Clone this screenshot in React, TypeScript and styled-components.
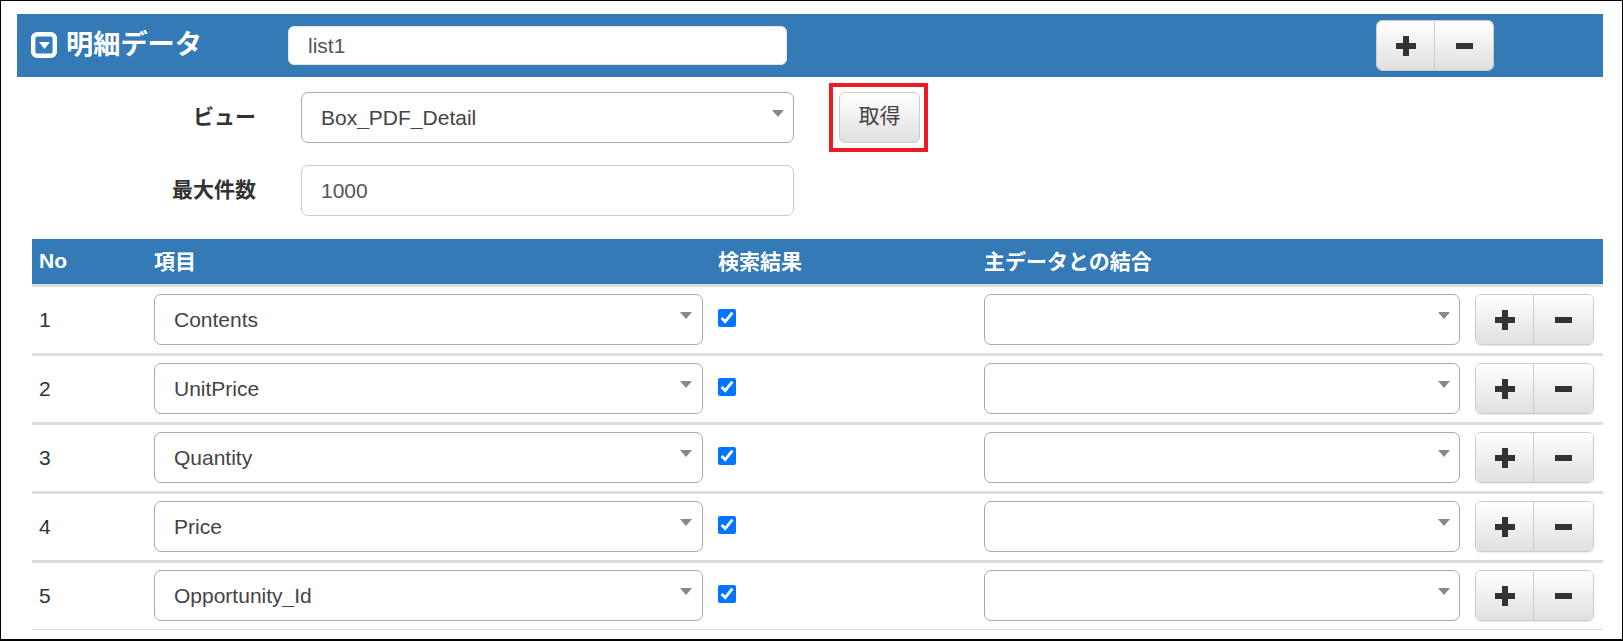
import React from "react";
import styled, { createGlobalStyle } from "styled-components";

const FONT = `"Liberation Sans", "Noto Sans CJK JP", sans-serif`;

const Global = createGlobalStyle`
  html, body { margin: 0; padding: 0; background: #fff; }
  * { box-sizing: border-box; }
`;

const Frame = styled.div`
  width: 1623px;
  height: 641px;
  border: 1px solid #000;
  border-bottom-width: 2px;
  padding: 13px 19px 0 16px;
  font-family: ${FONT};
  font-size: 21px;
  color: #333;
  overflow: hidden;
`;

const TitleBar = styled.div`
  height: 63px;
  background: #337ab7;
  display: flex;
  align-items: center;
  padding-left: 14px;
`;

const TitleGroup = styled.div`
  width: 257px;
  display: flex;
  align-items: center;
  gap: 9px;
`;

const IconBox = styled.span`
  display: flex;
  margin-bottom: 2px;
`;

const Title = styled.h2`
  margin: 0;
  padding-bottom: 2px;
  color: #fff;
  font-size: 27.2px;
  line-height: 32px;
  font-weight: 700;
  white-space: nowrap;
`;

const NameInput = styled.input`
  width: 499px;
  height: 39px;
  padding: 0 19px;
  border: 1px solid #e4e4e4;
  border-radius: 6px;
  background: #fff;
  color: #555;
  font: inherit;
`;

const BarActions = styled.div`
  margin-left: 589px;
  display: flex;
`;

const ButtonGroup = styled.div<{ $width: number }>`
  display: inline-flex;
  width: ${(p) => p.$width}px;
  height: 51px;
  border: 1px solid #ccc;
  border-radius: 6px;
  overflow: hidden;
  box-shadow: 0 1px 1px rgba(0, 0, 0, 0.08);
`;

const GroupButton = styled.button<{ $divided?: boolean }>`
  flex: ${(p) => (p.$divided ? "0 0 58px" : "1")};
  padding: 0;
  display: flex;
  align-items: center;
  justify-content: center;
  border: 0;
  border-right: ${(p) => (p.$divided ? "1px solid #ccc" : "0")};
  background: linear-gradient(#fff, #e0e0e0);
`;

const FormSection = styled.div`
  padding-top: 15px;
  display: flex;
  flex-direction: column;
  gap: 22px;
`;

const FormRow = styled.div`
  display: flex;
  align-items: center;
`;

const FormLabel = styled.label`
  width: 239px;
  margin-right: 45px;
  padding-bottom: 5px;
  text-align: right;
  font-weight: 700;
  color: #333;
`;

const SelectWrap = styled.div<{ $width: number; $arrowRight?: number }>`
  position: relative;
  width: ${(p) => p.$width}px;
  height: 51px;
  &::after {
    content: "";
    position: absolute;
    top: 18px;
    right: ${(p) => p.$arrowRight ?? 10}px;
    border-style: solid;
    border-width: 7px 6px 0;
    border-color: #888 transparent transparent;
  }
`;

const Select = styled.select`
  appearance: none;
  display: block;
  width: 100%;
  height: 100%;
  padding: 0 19px;
  border: 1px solid #aaa;
  border-radius: 7px;
  background: #fff;
  color: #444;
  font: inherit;
`;

const TextInput = styled.input`
  width: 493px;
  height: 51px;
  padding: 0 19px;
  border: 1px solid #ccc;
  border-radius: 7px;
  background: #fff;
  color: #555;
  font: inherit;
`;

const FetchButton = styled.button`
  position: relative;
  width: 81px;
  height: 51px;
  margin-left: 45px;
  border: 1px solid #ccc;
  border-radius: 6px;
  background: linear-gradient(#fff, #e0e0e0);
  color: #444;
  font: inherit;
  padding: 0 0 7px;
  &::after {
    content: "";
    position: absolute;
    top: -10px;
    left: -11px;
    right: -9px;
    bottom: -10px;
    border: 4px solid #ed1c24;
  }
`;

const Table = styled.div`
  margin: 23px 0 0 15px;
`;

const HeadRow = styled.div`
  display: grid;
  grid-template-columns: 122px 564px 266px 610px;
  align-items: center;
  height: 48px;
  background: #337ab7;
  border-bottom: 3px solid #ddd;
  color: #fff;
  font-weight: 700;
`;

const HeadCell = styled.div<{ $latin?: boolean }>`
  padding-left: ${(p) => (p.$latin ? 7 : 0)}px;
  padding-bottom: ${(p) => (p.$latin ? 1 : 3)}px;
  white-space: nowrap;
`;

const Row = styled.div<{ $last?: boolean }>`
  display: grid;
  grid-template-columns: 122px 564px 266px 491px 119px;
  padding: 7px 0 8px;
  border-bottom: ${(p) => (p.$last ? "1px solid #ddd" : "3px solid #ddd")};
`;

const NoCell = styled.div`
  padding-left: 7px;
  align-self: center;
  color: #333;
`;

const Check = styled.input`
  display: block;
  width: 18px;
  height: 18px;
  margin: 15px 0 0;
`;

const PlusIcon = () => (
  <svg width="20" height="20" viewBox="0 0 20 20" aria-hidden="true">
    <path d="M7 0h6v7h7v6h-7v7H7v-7H0V7h7z" fill="#333" />
  </svg>
);

const MinusIcon = () => (
  <svg width="17" height="6" viewBox="0 0 17 6" aria-hidden="true">
    <rect width="17" height="6" fill="#333" />
  </svg>
);

const ExpandIcon = () => (
  <svg width="26" height="26" viewBox="0 0 26 26" aria-hidden="true">
    <rect x="2.2" y="2.2" width="21.6" height="21.6" rx="4" fill="none" stroke="#fff" strokeWidth="4.4" />
    <path d="M8 10h11l-5.5 7z" fill="#fff" />
  </svg>
);

const PlusMinus = ({ width }: { width: number }) => (
  <ButtonGroup $width={width}>
    <GroupButton $divided aria-label="add"><PlusIcon /></GroupButton>
    <GroupButton aria-label="remove"><MinusIcon /></GroupButton>
  </ButtonGroup>
);

const rows = ["Contents", "UnitPrice", "Quantity", "Price", "Opportunity_Id"];

export default function App() {
  return (
    <>
      <Global />
      <Frame>
        <TitleBar>
          <TitleGroup>
            <IconBox><ExpandIcon /></IconBox>
            <Title>明細データ</Title>
          </TitleGroup>
          <NameInput defaultValue="list1" />
          <BarActions><PlusMinus width={118} /></BarActions>
        </TitleBar>

        <FormSection>
          <FormRow>
            <FormLabel>ビュー</FormLabel>
            <SelectWrap $width={493}>
              <Select defaultValue="Box_PDF_Detail">
                <option>Box_PDF_Detail</option>
              </Select>
            </SelectWrap>
            <FetchButton>取得</FetchButton>
          </FormRow>
          <FormRow>
            <FormLabel>最大件数</FormLabel>
            <TextInput defaultValue="1000" />
          </FormRow>
        </FormSection>

        <Table>
          <HeadRow>
            <HeadCell $latin>No</HeadCell>
            <HeadCell>項目</HeadCell>
            <HeadCell>検索結果</HeadCell>
            <HeadCell>主データとの結合</HeadCell>
          </HeadRow>
          {rows.map((name, i) => (
            <Row key={name} $last={i === rows.length - 1}>
              <NoCell>{i + 1}</NoCell>
              <SelectWrap $width={549} $arrowRight={11}>
                <Select defaultValue={name}>
                  <option>{name}</option>
                </Select>
              </SelectWrap>
              <div>
                <Check type="checkbox" defaultChecked />
              </div>
              <SelectWrap $width={476}>
                <Select defaultValue="">
                  <option value=""></option>
                </Select>
              </SelectWrap>
              <PlusMinus width={119} />
            </Row>
          ))}
        </Table>
      </Frame>
    </>
  );
}
